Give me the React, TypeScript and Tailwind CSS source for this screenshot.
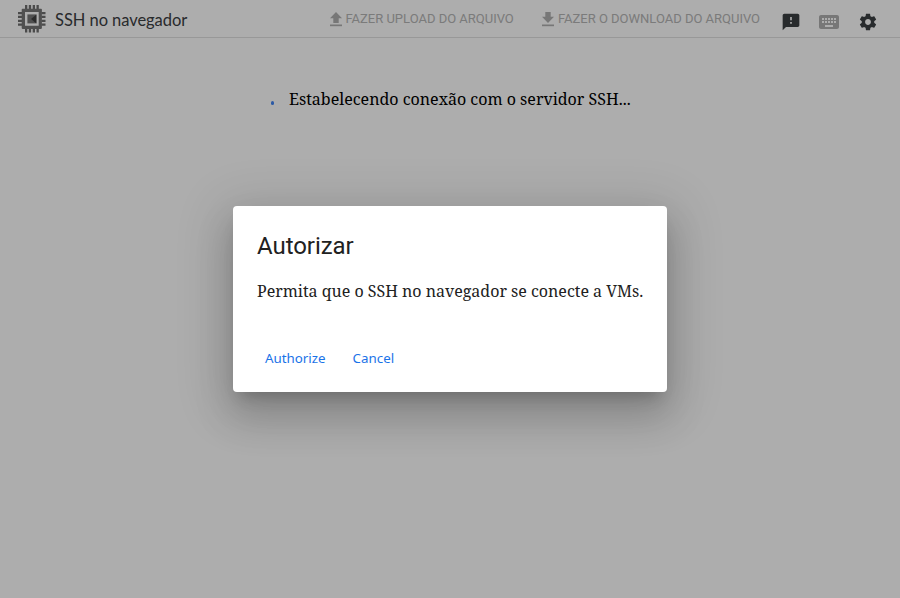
import React from 'react';

const Chip = () => (
  <svg className="h-7 w-7 shrink-0" viewBox="0 0 28 28">
    <path fill="#6f6f6f" d="M7 0h2.300v4H7zM10.800 0h2.300v4h-2.300zM14.700 0H17v4h-2.300zM18.500 0h2.300v4h-2.300zM7 23.500h2.300v4H7zM10.800 23.500h2.300v4h-2.300zM14.700 23.500H17v4h-2.300zM18.500 23.500h2.300v4h-2.300zM0 7h4v2.300H0zM0 10.800h4v2.300H0zM0 14.700h4V17H0zM0 18.500h4v2.300H0zM23.500 7h4v2.300h-4zM23.500 10.800h4v2.300h-4zM23.500 14.700h4V17h-4zM23.500 18.500h4v2.300h-4z" />
    <path fill="#777777" fillRule="evenodd" d="M4.500 3.700h18.600a.8.8 0 0 1 .8.8v18.600a.8.8 0 0 1-.8.800H4.500a.8.8 0 0 1-.8-.8V4.500a.8.8 0 0 1 .8-.8zM7 7v13.700h13.700V7z" />
    <path fill="#777777" d="M9.400 9.400h9v9h-9z" />
    <path fill="#424242" d="M18.400 9.400v9L13 13.900z" />
  </svg>
);

const Transfer = ({ d }: { d: string }) => (
  <svg className="mt-[3px] h-4 w-4 shrink-0" viewBox="0 0 16 16" fill="#b0b0b0">
    <path d={d} />
    <path d="M2 12.500h12v1.700H2z" />
  </svg>
);

export default function App() {
  return (
    <div className="relative h-[598px] w-[900px] overflow-hidden bg-white">
      <header className="flex h-[38px] items-start border-b border-[#e0e0e0] pl-[18px]">
        <div className="flex w-[310px] items-start gap-[9px] pt-[5px]">
          <Chip />
          <h1 className="pt-[3px] font-['Google_Sans','Product_Sans',Lato,sans-serif] text-[16.5px] leading-6 tracking-[-0.06px] whitespace-nowrap text-[#3c4043]">SSH no navegador</h1>
        </div>
        <div className="flex h-[38px] items-start pt-[9px] font-[Roboto,sans-serif] text-[13px] leading-5 tracking-[-0.01px] whitespace-nowrap text-[#b5b5b5]">
          <div className="flex w-[212px] items-start gap-[1.500px]">
            <Transfer d="M8 0l6 6.200h-3.300V11H5.300V6.200H2z" />
            <span>FAZER UPLOAD DO ARQUIVO</span>
          </div>
          <div className="flex w-[241px] items-start gap-[2px]">
            <Transfer d="M5.300 0h5.400v4.800H14L8 11 2 4.800h3.300z" />
            <span>FAZER O DOWNLOAD DO ARQUIVO</span>
          </div>
        </div>
        <div className="flex items-center pt-[10px]">
          <svg className="h-5 w-5" viewBox="0 0 24 24" fill="#3c4043"><path d="M20 2H4c-1.100 0-2 .9-2 2v18l4-4h14c1.100 0 2-.9 2-2V4c0-1.100-.9-2-2-2zm-7 12h-2v-2h2v2zm0-4h-2V6h2v4z" /></svg>
          <svg className="ml-4 h-6 w-6" viewBox="0 0 24 24" fill="#b0b0b0"><path d="M20 5H4c-1.100 0-2 .9-2 2v10c0 1.100.9 2 2 2h16c1.100 0 2-.9 2-2V7c0-1.100-.9-2-2-2zm-9 3h2v2h-2V8zm0 3h2v2h-2v-2zM8 8h2v2H8V8zm0 3h2v2H8v-2zm-1 2H5v-2h2v2zm0-3H5V8h2v2zm9 7H8v-2h8v2zm0-4h-2v-2h2v2zm0-3h-2V8h2v2zm3 3h-2v-2h2v2zm0-3h-2V8h2v2z" /></svg>
          <svg className="ml-[17px] h-5 w-5" viewBox="0 0 24 24" fill="#3c4043"><path d="M19.430 12.980c.04-.32.07-.64.07-.98s-.03-.66-.07-.98l2.110-1.650c.19-.15.24-.42.12-.64l-2-3.460c-.12-.22-.39-.3-.61-.22l-2.490 1c-.52-.4-1.080-.73-1.690-.98l-.38-2.650C14.460 2.180 14.250 2 14 2h-4c-.25 0-.46.18-.49.42l-.38 2.650c-.61.25-1.170.59-1.690.98l-2.490-1c-.23-.09-.49 0-.61.22l-2 3.460c-.13.22-.07.49.12.64l2.110 1.650c-.04.32-.07.65-.07.98s.03.66.07.98l-2.110 1.650c-.19.15-.24.42-.12.64l2 3.460c.12.22.39.3.61.22l2.490-1c.52.4 1.080.73 1.690.98l.38 2.650c.03.24.24.42.49.42h4c.25 0 .46-.18.49-.42l.38-2.650c.61-.25 1.170-.59 1.690-.98l2.490 1c.23.09.49 0 .61-.22l2-3.460c.12-.22.07-.49-.12-.64l-2.110-1.650zM12 15.500c-1.930 0-3.500-1.570-3.500-3.500s1.570-3.500 3.500-3.500 3.500 1.570 3.500 3.500-1.570 3.500-3.500 3.500z" /></svg>
        </div>
      </header>
      <main className="flex items-center pt-[50px] pl-[270.500px]">
        <span className="mt-[7.500px] mr-[15px] h-[3.500px] w-[3.500px] rounded-full bg-[#4285f4]" />
        <p className="font-['Noto_Serif','Droid_Serif','Liberation_Serif',serif] text-[16px] leading-[22px] whitespace-nowrap text-black">Estabelecendo conexão com o servidor SSH...</p>
      </main>
      <div className="absolute inset-0 flex items-center justify-center bg-black/32">
        <section className="h-[186px] w-[434px] rounded bg-white p-6 shadow-[0_11px_15px_-7px_rgba(0,0,0,0.2),0_24px_38px_3px_rgba(0,0,0,0.14),0_9px_50px_12px_rgba(0,0,0,0.12)]">
          <h2 className="font-[Roboto,sans-serif] text-2xl leading-8 tracking-[-0.05px] text-[#212121]">Autorizar</h2>
          <p className="mt-[18px] font-['Noto_Serif','Droid_Serif','Liberation_Serif',serif] text-[16px] leading-[22px] tracking-[-0.01px] whitespace-nowrap text-[#212121]">Permita que o SSH no navegador se conecte a VMs.</p>
          <div className="mt-[46px] flex gap-[27px] pl-2 font-['Noto_Sans',sans-serif] text-[13.333px] leading-5 text-[#1a73e8]">
            <button>Authorize</button>
            <button>Cancel</button>
          </div>
        </section>
      </div>
    </div>
  );
}
